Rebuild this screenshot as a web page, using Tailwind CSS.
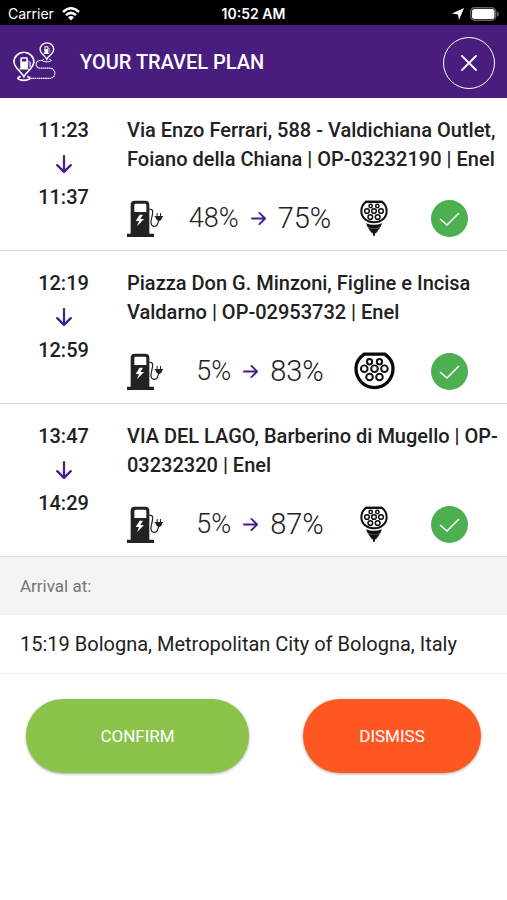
<!DOCTYPE html>
<html lang="en">
<head>
  <meta charset="UTF-8" />
  <meta name="viewport" content="width=device-width, initial-scale=1.0"/>
  <title>Your Travel Plan</title>
  <script src="https://cdn.jsdelivr.net/npm/@tailwindcss/browser@4"></script>
</head>
<body class="bg-white min-h-screen font-['Roboto',sans-serif] text-[#212121]">

  <!-- Shared icons -->
  <svg class="hidden" aria-hidden="true">
    <symbol id="pump" viewBox="22 28 108 111">
      <path fill="#222" fill-rule="evenodd" d="M33 129V42q0-12 12-12h32q12 0 12 12v87h14v10H22v-10zM48 39q-4 0-4 4v21h36V43q0-4-4-4zM60 72 48 91h10l-6 16 21-22H62l8-13z"/>
      <path fill="none" stroke="#222" stroke-width="3.500" d="M89 56h4q6 0 6 7c0 14-6 24-5 34 1 12 17 14 20 2l4-12"/>
      <path fill="#222" d="M111 67h3v9h7v-9h3v9h6v4h-3q0 10-9 11-9-1-10-11h-3v-4h6z"/>
    </symbol>
    <symbol id="plug-combo" viewBox="28 32 84 106">
      <path fill="#fff" stroke="#111" stroke-width="6" d="M47 36h46c10 7 15 17 15 28 0 19-15 34-38 34s-38-15-38-34c0-11 5-21 15-28z"/>
      <path fill="#111" d="M45 33h50l5 7H40zM46 101q24 9 48 0l-5 12q-19 7-38 0zM52 114q18 6 36 0l-9 13-3 4h-3v7h-6v-7h-3l-3-4z"/>
      <g fill="none" stroke="#111" stroke-width="4.500">
        <circle cx="60" cy="49" r="5"/><circle cx="80" cy="49" r="5"/>
        <circle cx="49" cy="64" r="7"/><circle cx="70" cy="64" r="7"/><circle cx="91" cy="64" r="7"/>
        <circle cx="59" cy="82" r="7"/><circle cx="81" cy="82" r="7"/>
      </g>
    </symbol>
    <symbol id="plug-type2" viewBox="44 36 124 114">
      <path fill="#fff" stroke="#080808" stroke-width="10" d="M75 42h62c16 11 25 25 25 43 0 34-25 58-56 58s-56-24-56-58c0-18 9-32 25-43z"/>
      <g fill="none" stroke="#111" stroke-width="6">
        <circle cx="91" cy="65" r="8"/><circle cx="121" cy="65" r="8"/>
        <circle cx="75" cy="86" r="10"/><circle cx="106" cy="86" r="10"/><circle cx="136" cy="86" r="10"/>
        <circle cx="91" cy="111" r="10"/><circle cx="121" cy="111" r="10"/>
      </g>
    </symbol>
    <symbol id="arrow" viewBox="0 0 16 16">
      <path fill="none" stroke="#45208a" stroke-width="2" stroke-linecap="round" stroke-linejoin="round" d="M1 8h13M9 2l6 6-6 6"/>
    </symbol>
    <symbol id="check" viewBox="0 0 37 37">
      <circle cx="18.500" cy="18.500" r="18.500" fill="#4caf50"/>
      <path fill="none" stroke="#fff" stroke-width="1.500" d="m9 19 7 6 12-12"/>
    </symbol>
  </svg>

  <!-- Status bar -->
  <div class="grid grid-cols-3 items-center h-[25px] px-2 pt-[2px] bg-black text-white font-['Inter',sans-serif] text-sm leading-5">
    <div class="flex items-center gap-2">
      <span>Carrier</span>
      <svg class="w-[18px] h-[14px]" viewBox="0 0 18 14">
        <g fill="none" stroke="#fff" stroke-width="2.500"><path d="M1 5q8-7.500 16 0M4 8.200q5-4.600 10 0"/></g>
        <path fill="#fff" d="M6 10.300q3-2.600 6 0L9 13.500z"/>
      </svg>
    </div>
    <span class="text-center font-semibold">10:52 AM</span>
    <div class="flex items-center justify-end gap-[6px]">
      <svg class="w-3 h-3" viewBox="0 0 12 12"><path fill="#fff" d="M12 0 7 12 6 6.500 0 5.500z"/></svg>
      <svg class="w-[29px] h-[14px]" viewBox="0 0 29 14">
        <rect x=".7" y=".7" width="25" height="12.600" rx="4" fill="none" stroke="#666" stroke-width="1.400"/>
        <rect x="2" y="2" width="22.500" height="10" rx="2.500" fill="#fff"/>
        <path fill="#666" d="M27 4.500q2 1 2 2.500t-2 2.500z"/>
      </svg>
    </div>
  </div>

  <header class="flex items-center h-[73px] pl-[13px] pr-3 bg-[#491d7d] text-white">
    <svg class="w-[43px] h-[41px] mr-6" viewBox="38 36 130 122">
      <g fill="none" stroke="#fff" stroke-width="5">
        <path d="M71 143C64 128 41 117 41 98a30 29 0 0 1 60 0c0 19-23 30-30 45z"/>
        <path stroke-width="4" d="M140 90c-4-10-20-16-20-29a20 20 0 0 1 41 0c0 13-17 19-21 29z"/>
        <path d="M61 142c-14 4-9 12 10 12s24-8 10-12"/>
        <path stroke-width="3" d="M132 90c-10 3-5 8 8 8s18-5 8-8"/>
        <path stroke-width="3.500" stroke-dasharray="5 1.500" d="M128 94h-8c-16 0-16 23 0 23h28c22 0 22 31 0 31H88"/>
      </g>
      <path fill="#fff" fill-rule="evenodd" d="M60 117V88q0-4 4-4h15q4 0 4 4v29h2v4H58v-4zm5-28v8h13v-8z"/>
      <path fill="none" stroke="#fff" stroke-width="2" d="M83 96h4v16h4V98"/>
      <path fill="#fff" fill-rule="evenodd" d="M133 71V51h12v20h2v3h-16v-3zm3-17v5h6v-5z"/>
      <path fill="none" stroke="#fff" stroke-width="1.500" d="M145 58h4v12"/>
    </svg>
    <h1 class="flex-1 text-xl leading-6 font-medium">YOUR TRAVEL PLAN</h1>
    <button type="button" aria-label="Close" class="flex items-center justify-center size-[52px] mt-[3px] rounded-full border border-white">
      <svg class="size-4" viewBox="0 0 16 16"><path stroke="#fff" stroke-width="1.800" stroke-linecap="round" d="m1 1 14 14M15 1 1 15"/></svg>
    </button>
  </header>

  <main>
    <ol>
      <li class="flex pt-[18px] border-b border-[#dcdcdc]">
        <div class="flex flex-col items-center w-[127px] shrink-0 text-xl leading-[29px] font-medium">
          <time>11:23</time>
          <svg class="size-[18px] my-[10px] rotate-90"><use href="#arrow"/></svg>
          <time>11:37</time>
        </div>
        <div class="flex-1 pr-2">
          <h2 class="text-xl leading-[29px] font-medium">Via Enzo Ferrari, 588 - Valdichiana Outlet, Foiano della Chiana | OP-03232190 | Enel</h2>
          <div class="grid grid-cols-[50px_166fr_62fr_88fr] items-center justify-items-center h-16 mt-3 pr-[6px]">
            <svg class="w-9 h-[37px] justify-self-start"><use href="#pump"/></svg>
            <div class="flex items-center gap-3 font-light">
              <span class="text-[27px] leading-9">48%</span>
              <svg class="size-[15px]"><use href="#arrow"/></svg>
              <span class="text-[29px] leading-9">75%</span>
            </div>
            <svg class="w-7 h-9"><use href="#plug-combo"/></svg>
            <svg class="size-[37px]"><use href="#check"/></svg>
          </div>
        </div>
      </li>

      <li class="flex pt-[18px] border-b border-[#dcdcdc]">
        <div class="flex flex-col items-center w-[127px] shrink-0 text-xl leading-[29px] font-medium">
          <time>12:19</time>
          <svg class="size-[18px] my-[10px] rotate-90"><use href="#arrow"/></svg>
          <time>12:59</time>
        </div>
        <div class="flex-1 pr-2">
          <h2 class="text-xl leading-[29px] font-medium">Piazza Don G. Minzoni, Figline e Incisa Valdarno | OP-02953732 | Enel</h2>
          <div class="grid grid-cols-[50px_166fr_62fr_88fr] items-center justify-items-center h-16 mt-3 pr-[6px]">
            <svg class="w-9 h-[37px] justify-self-start"><use href="#pump"/></svg>
            <div class="flex items-center gap-3 font-light">
              <span class="text-[27px] leading-9">5%</span>
              <svg class="size-[15px]"><use href="#arrow"/></svg>
              <span class="text-[29px] leading-9">83%</span>
            </div>
            <svg class="w-[41px] h-[38px]"><use href="#plug-type2"/></svg>
            <svg class="size-[37px]"><use href="#check"/></svg>
          </div>
        </div>
      </li>

      <li class="flex pt-[18px] border-b border-[#dcdcdc]">
        <div class="flex flex-col items-center w-[127px] shrink-0 text-xl leading-[29px] font-medium">
          <time>13:47</time>
          <svg class="size-[18px] my-[10px] rotate-90"><use href="#arrow"/></svg>
          <time>14:29</time>
        </div>
        <div class="flex-1 pr-2">
          <h2 class="text-xl leading-[29px] font-medium">VIA DEL LAGO, Barberino di Mugello | OP-03232320 | Enel</h2>
          <div class="grid grid-cols-[50px_166fr_62fr_88fr] items-center justify-items-center h-16 mt-3 pr-[6px]">
            <svg class="w-9 h-[37px] justify-self-start"><use href="#pump"/></svg>
            <div class="flex items-center gap-3 font-light">
              <span class="text-[27px] leading-9">5%</span>
              <svg class="size-[15px]"><use href="#arrow"/></svg>
              <span class="text-[29px] leading-9">87%</span>
            </div>
            <svg class="w-7 h-9"><use href="#plug-combo"/></svg>
            <svg class="size-[37px]"><use href="#check"/></svg>
          </div>
        </div>
      </li>
    </ol>

    <h2 class="px-5 py-[17px] bg-[#f4f4f4] text-[17px] leading-6 text-[#757575]">Arrival at:</h2>
    <p class="px-5 py-[17px] border-b border-[#eeeeee] text-xl leading-6">15:19 Bologna, Metropolitan City of Bologna, Italy</p>

    <div class="flex gap-[54px] px-[26px] pt-[25px]">
      <button type="button" class="flex-[223] h-[74px] rounded-full bg-[#8bc34a] text-white text-[17px] leading-6 shadow-[0_1px_3px_rgba(0,0,0,0.35)]">CONFIRM</button>
      <button type="button" class="flex-[178] h-[74px] rounded-full bg-[#ff5722] text-white text-[17px] leading-6 shadow-[0_1px_3px_rgba(0,0,0,0.35)]">DISMISS</button>
    </div>
  </main>

</body>
</html>
